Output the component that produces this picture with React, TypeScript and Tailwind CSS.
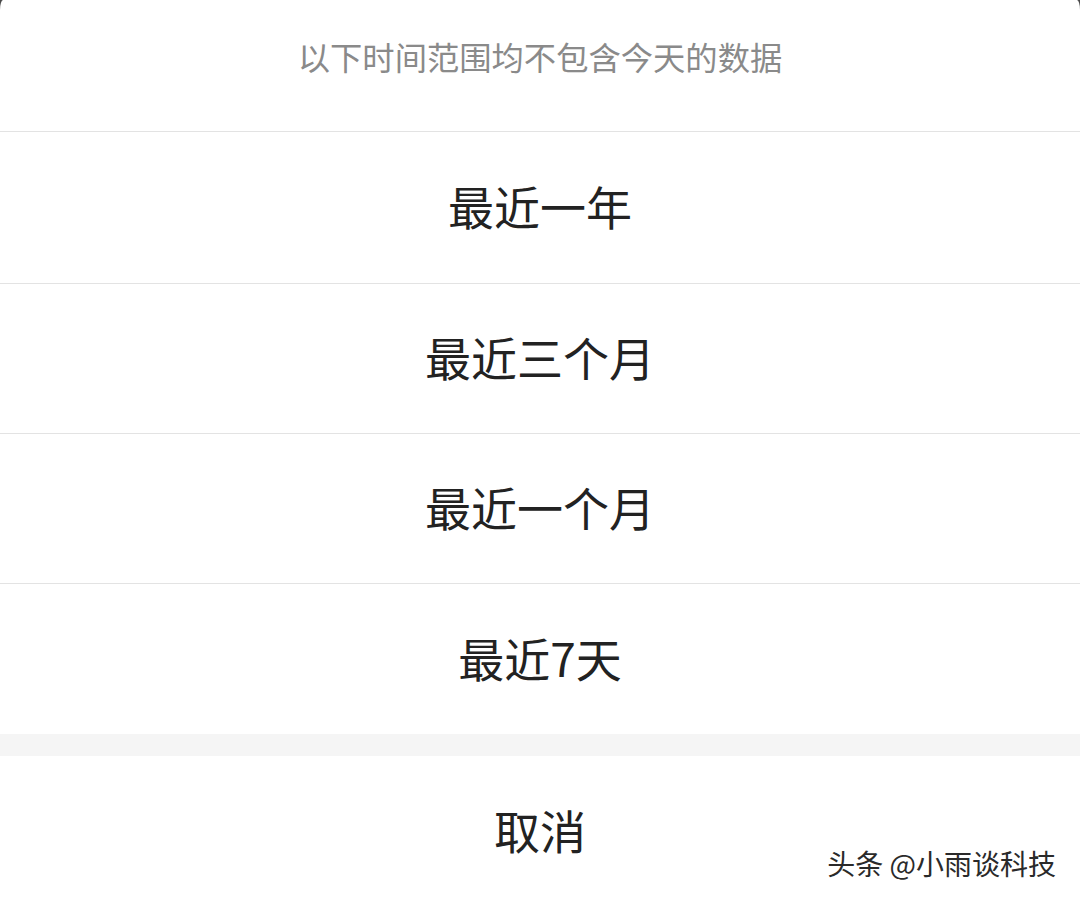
import React from "react";

const rows = ["最近一年", "最近三个月", "最近一个月", "最近7天"];

export default function App() {
  return (
    <div
      className="relative w-[1080px] h-[903px] overflow-hidden bg-[#4a4a4a]"
      style={{ fontFamily: '"Noto Sans CJK SC", "Noto Sans", sans-serif' }}
    >
      <div className="flex flex-col w-full h-full bg-white rounded-tl-[3px_10px] rounded-tr-[3px_10px]">
        <div className="h-[132px] shrink-0 border-b border-[#e3e3e3] flex items-start justify-center pt-[34px]">
          <span className="text-[32.3px] leading-[44px] text-[#8a8a8a]">以下时间范围均不包含今天的数据</span>
        </div>
        {rows.map((r, i) => (
          <div
            key={r}
            className={
              i === 0
                ? "h-[152px] shrink-0 border-b border-[#e3e3e3] flex items-center justify-center pb-[5px]"
                : i === 3
                ? "h-[150px] shrink-0 flex items-center justify-center pb-[5px]"
                : "h-[150px] shrink-0 border-b border-[#e3e3e3] flex items-center justify-center pb-[5px]"
            }
          >
            <span className="text-[46px] leading-[60px] text-[#222222]">{r}</span>
          </div>
        ))}
        <div className="h-[22px] shrink-0 bg-[#f5f5f5]" />
        <div className="flex-1 flex items-center justify-center pb-[1px]">
          <span className="text-[46px] leading-[60px] text-[#222222]">取消</span>
        </div>
      </div>
      <div
        className="absolute right-[24px] bottom-[22px] text-[28px] leading-[36px] text-[#2a2a2a]"
        style={{ textShadow: "1px 1px 0 #fff, -1px -1px 0 #fff, 1px -1px 0 #fff, -1px 1px 0 #fff" }}
      >
        头条 @小雨谈科技
      </div>
    </div>
  );
}
